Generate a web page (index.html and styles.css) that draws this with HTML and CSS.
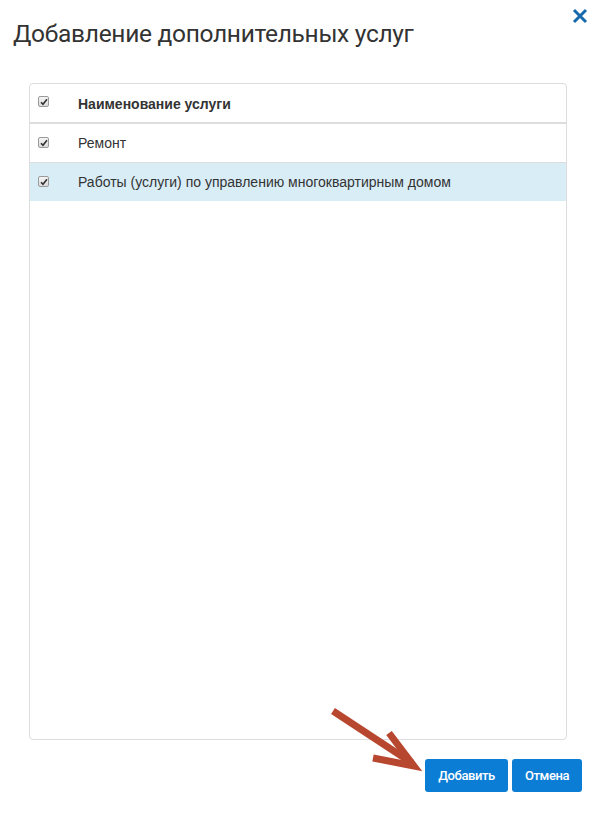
FILE: index.html
```html
<!DOCTYPE html>
<html lang="ru">
<head>
<meta charset="utf-8">
<link rel="stylesheet" href="styles.css">
</head>
<body>
<div class="modal">
  <div class="modal-header">
    <h1 class="title">Добавление дополнительных услуг</h1>
    <button class="close" aria-label="Закрыть">
      <svg width="16" height="16" viewBox="0 0 16 16"><path d="M2 2 L14 14 M14 2 L2 14" stroke="#1769ab" stroke-width="3" fill="none"/></svg>
    </button>
  </div>
  <div class="table-box">
    <table class="grid">
      <thead>
        <tr><th class="cb"><span class="check"><svg width="8" height="8" viewBox="0 0 8 8"><path d="M1 4.2 L3 6.3 L7 1.2" stroke="#333" stroke-width="1.6" fill="none"/></svg></span></th><th>Наименование услуги</th></tr>
      </thead>
      <tbody>
        <tr><td class="cb"><span class="check"><svg width="8" height="8" viewBox="0 0 8 8"><path d="M1 4.2 L3 6.3 L7 1.2" stroke="#333" stroke-width="1.6" fill="none"/></svg></span></td><td>Ремонт</td></tr>
        <tr class="selected"><td class="cb"><span class="check"><svg width="8" height="8" viewBox="0 0 8 8"><path d="M1 4.2 L3 6.3 L7 1.2" stroke="#333" stroke-width="1.6" fill="none"/></svg></span></td><td>Работы (услуги) по управлению многоквартирным домом</td></tr>
      </tbody>
    </table>
  </div>
  <div class="footer">
    <svg class="arrow" width="100" height="70" viewBox="0 0 100 70">
      <path d="M7 8 L86 60" stroke="#b84730" stroke-width="7" fill="none"/>
      <path d="M63 30 L88 63 L47 55" stroke="#b84730" stroke-width="7" fill="none"/>
    </svg>
    <button class="btn btn-add">Добавить</button>
    <button class="btn btn-cancel">Отмена</button>
  </div>
</div>
</body>
</html>
```

FILE: styles.css
```css
html, body {
  margin: 0;
  padding: 0;
  background: #fff;
}
.modal {
  width: 595px;
  height: 816px;
  font-family: "Liberation Sans", Arial, sans-serif;
  color: #333;
}
.modal-header {
  display: flex;
  justify-content: space-between;
  align-items: flex-start;
  padding: 0 7px 0 13px;
  height: 83px;
}
.title {
  margin: 19px 0 0 0;
  font-family: Roboto, sans-serif;
  font-weight: 400;
  font-size: 24.5px;
  line-height: 30px;
  color: #333;
  letter-spacing: -0.3px;
}
.close {
  margin-top: 8px;
  padding: 0;
  border: 0;
  background: none;
  width: 16px;
  height: 16px;
  display: block;
}
.close svg { display: block; }
.table-box {
  margin-left: 29px;
  width: 536px;
  height: 655px;
  border: 1px solid #ddd;
  border-radius: 4px;
  overflow: hidden;
}
.grid {
  width: 100%;
  border-collapse: collapse;
  font-size: 14px;
}
.grid th, .grid td {
  text-align: left;
  padding: 0;
  vertical-align: middle;
}
.grid th {
  font-weight: bold;
  color: #333;
  border-bottom: 2px solid #ddd;
  height: 37px;
  padding-top: 1px;
}
.grid td {
  height: 38px;
  border-bottom: 1px solid #ddd;
  color: #333;
}
.grid tbody tr:last-child td { border-bottom: 0; }
.grid .cb {
  width: 40px;
  padding-left: 8px;
  padding-top: 0;
}
.check {
  display: flex;
  align-items: center;
  justify-content: center;
  width: 9px;
  height: 9px;
  border: 1px solid #9a9a9a;
  border-radius: 2px;
  background: linear-gradient(#f4f4f4, #dcdcdc);
  margin-top: -1px;
}
.check svg { display: block; }
.grid th .check { margin-top: -3px; }
.selected td { background: #d9edf7; }
.footer {
  display: flex;
  justify-content: flex-end;
  gap: 4px;
  padding: 19px 13px 0 0;
  position: relative;
}
.arrow {
  position: absolute;
  left: 326px;
  top: -37px;
}
.btn {
  font-family: Roboto, sans-serif;
  font-weight: 500;
  font-size: 13px;
  letter-spacing: -0.4px;
  color: #fff;
  background: #0b7dd5;
  border: 0;
  border-radius: 3px;
  height: 33px;
  padding: 0;
}
.btn-add { width: 83px; }
.btn-cancel { width: 70px; }
```
